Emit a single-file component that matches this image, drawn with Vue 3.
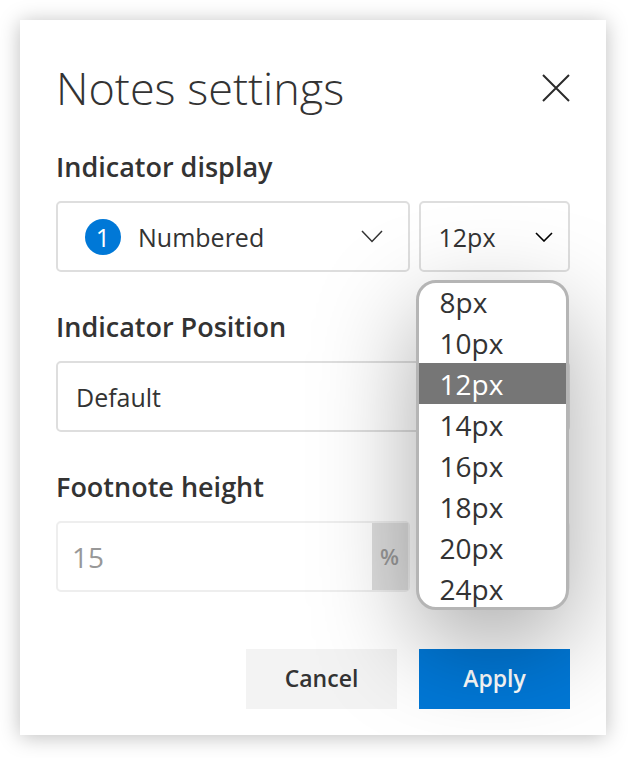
<script setup>
import { ref } from 'vue'

const sizes = ['8px', '10px', '12px', '14px', '16px', '18px', '20px', '24px']
const size = ref('12px')
const position = ref('Default')
const height = ref('15')
</script>

<template>
  <main class="dialog" role="dialog" aria-labelledby="dialog-title">
    <header class="header">
      <h1 id="dialog-title" class="title">Notes settings</h1>
      <button class="close" type="button" aria-label="Close">
        <svg width="28" height="28" viewBox="0 0 28 28" aria-hidden="true">
          <path d="M1 1 27 27M27 1 1 27" fill="none" stroke="#2b2b2b" stroke-width="2" />
        </svg>
      </button>
    </header>

    <section class="group">
      <label class="label" for="display">Indicator display</label>
      <div class="row">
        <button id="display" class="field display" type="button" aria-haspopup="listbox">
          <span class="badge">1</span>
          <span class="display-name">Numbered</span>
          <svg width="22" height="13" viewBox="0 0 22 13" aria-hidden="true">
            <path d="M1 1 11 11.500 21 1" fill="none" stroke="#333" stroke-width="1.500" />
          </svg>
        </button>
        <div class="size">
          <select v-model="size" class="field size-select" aria-label="Indicator size">
            <option v-for="s in sizes" :key="s">{{ s }}</option>
          </select>
          <svg class="size-arrow" width="18" height="10" viewBox="0 0 18 10" aria-hidden="true">
            <path d="M1 1 9 9 17 1" fill="none" stroke="#000" stroke-width="1.600" />
          </svg>
          <div class="popup">
            <ul class="options" role="listbox" aria-label="Indicator size">
              <li
                v-for="s in sizes"
                :key="s"
                class="option"
                :class="{ selected: s === size }"
                role="option"
                :aria-selected="s === size"
                @click="size = s"
              >{{ s }}</li>
            </ul>
          </div>
        </div>
      </div>
    </section>

    <section class="group">
      <label class="label" for="position">Indicator Position</label>
      <select id="position" v-model="position" class="field position">
        <option>Default</option>
      </select>
    </section>

    <section class="group">
      <label class="label" for="height">Footnote height</label>
      <div class="row disabled">
        <div class="field height">
          <input id="height" v-model="height" class="height-input" type="text" disabled />
          <span class="unit">%</span>
        </div>
        <select class="field" aria-label="Height mode" disabled></select>
      </div>
    </section>

    <footer class="footer">
      <button class="button" type="button">Cancel</button>
      <button class="button primary" type="button">Apply</button>
    </footer>
  </main>
</template>

<style>
body {
  background: #fff;
}
</style>

<style scoped>
.dialog,
.dialog * {
  box-sizing: border-box;
}

.dialog {
  margin: 20px 22px 23px 20px;
  padding: 36px 36px 26px;
  overflow: hidden;
  background: #fff;
  box-shadow: 0 2px 20px rgba(0, 0, 0, 0.26);
  color: #333;
  font-family: "Open Sans", "Noto Sans", sans-serif;
  font-size: 25px;
}

.dialog button,
.dialog select,
.dialog input {
  margin: 0;
  color: inherit;
  font-family: inherit;
}

.header {
  display: flex;
  align-items: center;
  justify-content: space-between;
  height: 63px;
  margin-bottom: 30px;
}

.title {
  margin: 0;
  font-size: 45px;
  font-weight: 300;
  line-height: 64px;
}

.close {
  display: flex;
  padding: 0;
  border: 0;
  background: none;
}

.group {
  margin-bottom: 37px;
}

.label {
  display: block;
  margin-bottom: 16px;
  font-size: 27px;
  font-weight: 600;
  line-height: 36px;
}

.row {
  display: grid;
  grid-template-columns: minmax(0, 7fr) minmax(0, 3fr);
  gap: 9px;
}

.field {
  display: block;
  width: 100%;
  height: 71px;
  border: 2px solid #dedede;
  border-radius: 5px;
  background: #fff;
  font-size: 25px;
  appearance: none;
}

.display {
  display: flex;
  align-items: center;
  padding: 0 25px 0 27px;
  text-align: left;
}

.badge {
  width: 36px;
  height: 36px;
  border-radius: 50%;
  background: #0078d7;
  color: #fff;
  line-height: 36px;
  text-align: center;
}

.display-name {
  flex: 1;
  padding-left: 17px;
}

.size {
  position: relative;
}

.size-select,
.position {
  padding: 0 18px;
}

.size-arrow {
  position: absolute;
  top: 31px;
  right: 17px;
  pointer-events: none;
}

.popup {
  position: absolute;
  z-index: 1;
  top: 79px;
  right: 1px;
  left: -3px;
  overflow: hidden;
  border: 3px solid #b5b5b5;
  border-radius: 20px;
  background: #fff;
  box-shadow: 0 34px 100px rgba(0, 0, 0, 0.34);
}

.options {
  margin: -2px 0;
  padding: 0;
  list-style: none;
}

.option {
  padding: 1px 0 0 21px;
  font-size: 28px;
  line-height: 40px;
}

.selected {
  background: #767676;
  color: #fff;
}

.disabled {
  opacity: 0.5;
}

.height {
  display: flex;
}

.height-input {
  flex: 1;
  width: 100%;
  min-width: 0;
  padding: 0 14px;
  border: 0;
  background: none;
  font-size: 28px;
}

.unit {
  flex: none;
  width: 36px;
  background: #bcbcbc;
  font-size: 22px;
  font-weight: 600;
  line-height: 67px;
  text-align: center;
}

.footer {
  display: flex;
  justify-content: flex-end;
  gap: 22px;
  margin-top: 57px;
}

.button {
  width: 151px;
  height: 60px;
  padding: 0 0 2px;
  border: 0;
  background: #f3f3f3;
  font-size: 23px;
  font-weight: 600;
}

.dialog .primary {
  background: #0078d7;
  color: #fff;
}
</style>
